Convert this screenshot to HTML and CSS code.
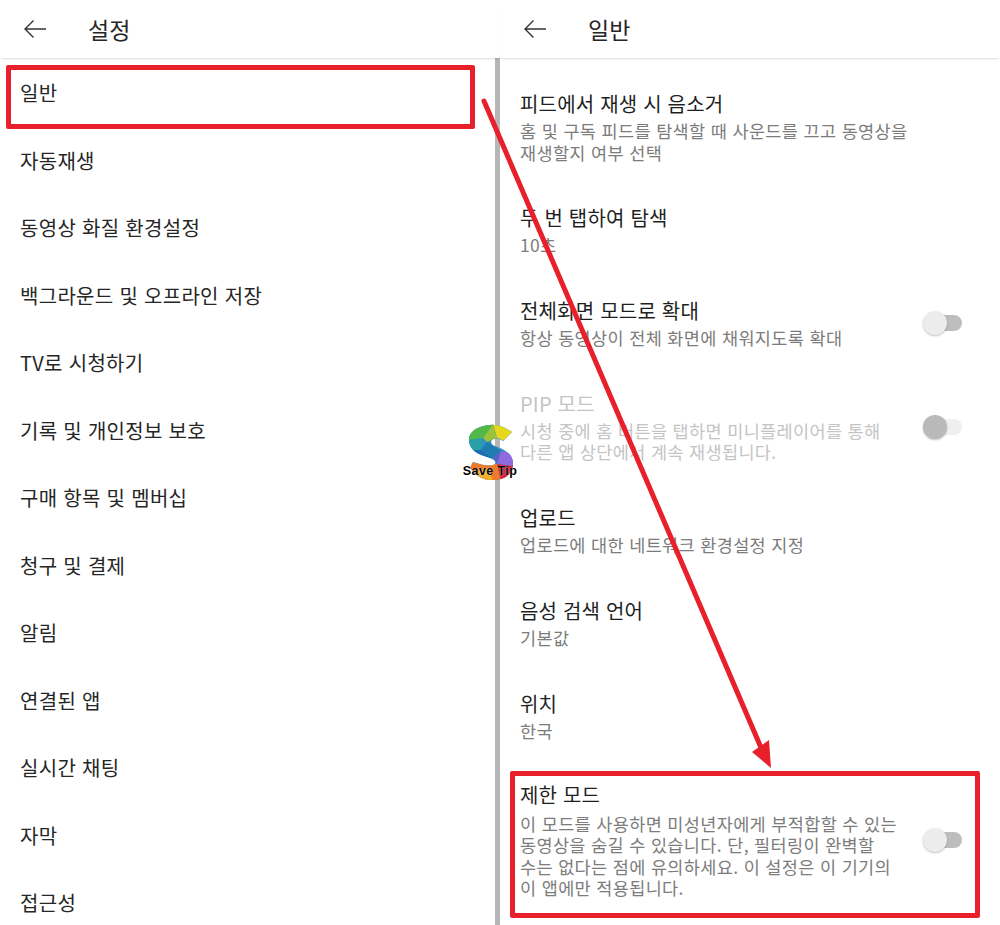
FILE: index.html
```html
<!DOCTYPE html>
<html lang="ko">
<head>
    <meta charset="UTF-8">
    <title>설정</title>
    <link rel="stylesheet" href="styles.css">
</head>
<body>
    <div class="screen">
        <section class="panel panel-left">
            <header class="app-bar">
                <svg class="back" width="24" height="20" viewBox="0 0 24 20"><path d="M23 10H2M10.500 1.500L2 10l8.500 8.500" fill="none" stroke="#333" stroke-width="1.400"/></svg>
                <h1>설정</h1>
            </header>
            <ul class="menu">
                <li>일반</li>
                <li>자동재생</li>
                <li>동영상 화질 환경설정</li>
                <li>백그라운드 및 오프라인 저장</li>
                <li>TV로 시청하기</li>
                <li>기록 및 개인정보 보호</li>
                <li>구매 항목 및 멤버십</li>
                <li>청구 및 결제</li>
                <li>알림</li>
                <li>연결된 앱</li>
                <li>실시간 채팅</li>
                <li>자막</li>
                <li>접근성</li>
            </ul>
        </section>

        <section class="panel panel-right">
            <header class="app-bar">
                <svg class="back" width="24" height="20" viewBox="0 0 24 20"><path d="M23 10H2M10.500 1.500L2 10l8.500 8.500" fill="none" stroke="#333" stroke-width="1.400"/></svg>
                <h1>일반</h1>
            </header>
            <div class="settings">
                <div class="setting">
                    <div class="setting-text">
                        <h2>피드에서 재생 시 음소거</h2>
                        <p>홈 및 구독 피드를 탐색할 때 사운드를 끄고 동영상을<br>재생할지 여부 선택</p>
                    </div>
                </div>
                <div class="setting">
                    <div class="setting-text">
                        <h2>두 번 탭하여 탐색</h2>
                        <p>10초</p>
                    </div>
                </div>
                <div class="setting">
                    <div class="setting-text">
                        <h2>전체화면 모드로 확대</h2>
                        <p>항상 동영상이 전체 화면에 채워지도록 확대</p>
                    </div>
                    <span class="toggle"></span>
                </div>
                <div class="setting disabled">
                    <div class="setting-text">
                        <h2>PIP 모드</h2>
                        <p>시청 중에 홈 버튼을 탭하면 미니플레이어를 통해<br>다른 앱 상단에서 계속 재생됩니다.</p>
                    </div>
                    <span class="toggle"></span>
                </div>
                <div class="setting">
                    <div class="setting-text">
                        <h2>업로드</h2>
                        <p>업로드에 대한 네트워크 환경설정 지정</p>
                    </div>
                </div>
                <div class="setting">
                    <div class="setting-text">
                        <h2>음성 검색 언어</h2>
                        <p>기본값</p>
                    </div>
                </div>
                <div class="setting setting-tight">
                    <div class="setting-text">
                        <h2>위치</h2>
                        <p>한국</p>
                    </div>
                </div>
                <div class="setting setting-restricted">
                    <div class="setting-text">
                        <h2>제한 모드</h2>
                        <p>이 모드를 사용하면 미성년자에게 부적합할 수 있는<br>동영상을 숨길 수 있습니다. 단, 필터링이 완벽할<br>수는 없다는 점에 유의하세요. 이 설정은 이 기기의<br>이 앱에만 적용됩니다.</p>
                    </div>
                    <span class="toggle"></span>
                </div>
            </div>
        </section>

        <!-- annotations drawn over the screenshot -->
        <div class="mark mark-general"></div>
        <div class="mark mark-restricted"></div>
        <svg class="arrow" width="1000" height="925" viewBox="0 0 1000 925">
            <path d="M484 101L762 750" fill="none" stroke="#e8202c" stroke-width="5" stroke-linecap="round"/>
            <path d="M752 752L769 740L771 768Z" fill="#e8202c"/>
        </svg>
        <div class="logo">
            <svg width="46" height="58" viewBox="0 0 46 58">
                <defs>
                    <clipPath id="s-shape">
                        <path d="M45 8C38 3 30 0 23 1C10 2 1 8 2 17C3 26 10 30 20 33C26 35 30 37 28 40C24 43 14 41 6 38L3 44C8 50 14 56 24 56C38 57 47 49 46 38C45 29 36 25 28 22C23 20 23 16 27 15C30 14 33 15 36 17Z"/>
                    </clipPath>
                </defs>
                <g clip-path="url(#s-shape)">
                    <rect width="46" height="58" fill="#2f8fc0"/>
                    <polygon points="0,0 26,0 16,14 0,16" fill="#52b848"/>
                    <polygon points="26,0 46,0 46,20 30,14" fill="#e6d81e"/>
                    <polygon points="16,14 26,0 30,14 20,18" fill="#9cc23a"/>
                    <polygon points="0,16 16,14 14,26 0,26" fill="#28a0a8"/>
                    <polygon points="0,26 14,26 26,34 16,34" fill="#1d6fb5"/>
                    <polygon points="14,26 20,18 34,27 26,34" fill="#1f7cb0"/>
                    <polygon points="34,27 46,30 46,42 30,40" fill="#8f6ae0"/>
                    <polygon points="26,34 34,27 30,40" fill="#5a62c8"/>
                    <polygon points="30,40 46,42 46,58 34,58" fill="#d8243c"/>
                    <polygon points="0,38 30,40 34,58 0,58" fill="#ee7a2a"/>
                    <polygon points="8,48 22,44 26,58 14,58" fill="#f2b02a"/>
                </g>
            </svg>
            <span class="logo-text">Save Tip</span>
        </div>
    </div>
</body>
</html>
```

FILE: styles.css
```css
* {
    box-sizing: border-box;
}

body {
    margin: 0;
    background: #fff;
    font-family: "Noto Sans CJK KR", "Noto Sans", sans-serif;
    color: #262626;
}

.screen {
    position: relative;
    display: flex;
    width: 1000px;
    height: 925px;
    overflow: hidden;
}

.panel {
    display: flex;
    flex-direction: column;
    width: 500px;
    height: 925px;
}

/* Top bar */
.app-bar {
    display: flex;
    align-items: center;
    flex: none;
    height: 58px;
    padding-left: 23px;
    background: #fff;
    box-shadow: 0 2px 2px -1px rgba(0, 0, 0, 0.14);
    position: relative;
}

.app-bar h1 {
    margin: 0 0 0 41px;
    font-size: 23px;
    font-weight: 400;
    line-height: 58px;
}

.back {
    flex: none;
}

/* Left list */
.menu {
    flex: 1;
    list-style: none;
    margin: 0;
    padding: 1px 0 0 20px;
    border-right: 5px solid #b6b6b6;
}

.menu li {
    height: 67.5px;
    font-size: 20px;
    line-height: 67px;
    letter-spacing: 0.3px;
    white-space: nowrap;
}

/* Right list */
.settings {
    padding: 30px 38px 0 20px;
}

.setting {
    display: flex;
    align-items: center;
    justify-content: space-between;
    margin-bottom: 39.300px;
}

.setting-tight {
    margin-bottom: 37.500px;
}

.setting h2 {
    margin: 0;
    font-size: 20px;
    font-weight: 400;
    line-height: 32px;
    letter-spacing: 0.2px;
    color: #1f1f1f;
}

.setting p {
    margin: 0;
    font-size: 17.500px;
    line-height: 21.500px;
    letter-spacing: 0.35px;
    color: #7c7c7c;
    white-space: nowrap;
}

.setting-restricted p {
    margin-top: 2px;
}

.disabled h2,
.disabled p {
    color: #c4c4c4;
}

/* Switch */
.toggle {
    position: relative;
    flex: none;
    width: 38px;
    height: 16px;
    margin-top: 3px;
    border-radius: 8px;
    background: #bdbdbd;
}

.toggle::before {
    content: "";
    position: absolute;
    left: -1px;
    top: -4px;
    width: 24px;
    height: 24px;
    border-radius: 50%;
    background: #ececec;
    box-shadow: 0 1px 2px rgba(0, 0, 0, 0.25);
}

.disabled .toggle {
    background: #efefef;
}

.disabled .toggle::before {
    background: #b9b9b9;
}

/* Annotations */
.mark {
    position: absolute;
    border: 5px solid #e8202c;
    border-radius: 2px;
}

.mark-general {
    left: 6px;
    top: 65px;
    width: 469px;
    height: 64px;
}

.mark-restricted {
    left: 510px;
    top: 771px;
    width: 470px;
    height: 147px;
}

.arrow {
    position: absolute;
    left: 0;
    top: 0;
}

.logo {
    position: absolute;
    left: 462px;
    top: 424px;
    width: 56px;
    height: 60px;
    display: flex;
    justify-content: center;
}

.logo-text {
    position: absolute;
    left: 0;
    top: 39px;
    width: 56px;
    font-family: "Liberation Sans", sans-serif;
    font-size: 12.500px;
    font-weight: 700;
    line-height: 16px;
    letter-spacing: 0.4px;
    text-align: center;
    white-space: nowrap;
    color: #000;
    text-shadow: 0 0 1px #fff;
}
```
